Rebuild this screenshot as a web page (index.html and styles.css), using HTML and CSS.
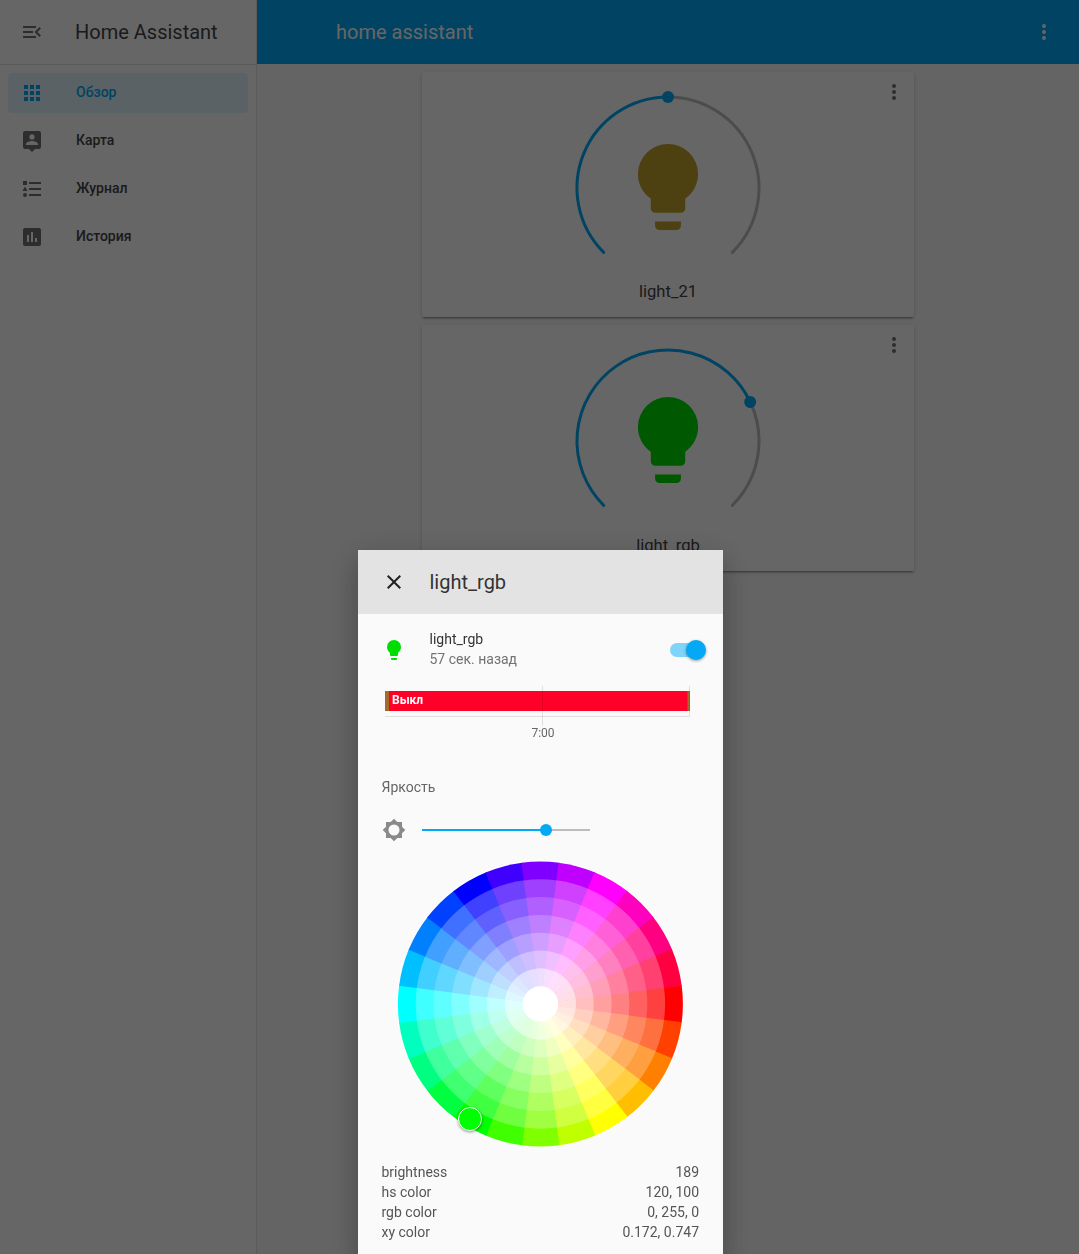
FILE: index.html
```html
<!doctype html>
<html>
<head>
	<title>Home Assistant</title>
	<link rel="stylesheet" href="styles.css">
</head>
<body>
	<div class="app">
		<div class="sidebar">
			<div class="sidebar-head">
				<svg class="icon head-icon" viewBox="0 0 24 24"><path d="M21,15.61L19.59,17L14.58,12L19.59,7L21,8.39L17.44,12L21,15.61M3,6H16V8H3V6M3,13V11H13V13H3M3,18V16H16V18H3Z"/></svg>
				<span class="sidebar-title">Home Assistant</span>
			</div>
			<div class="nav">
				<div class="nav-item active">
					<svg class="icon" viewBox="0 0 24 24"><path d="M16,20H20V16H16M16,14H20V10H16M10,8H14V4H10M16,8H20V4H16M10,14H14V10H10M4,14H8V10H4M4,20H8V16H4M10,20H14V16H10M4,8H8V4H4V8Z"/></svg>
					<span>Обзор</span>
				</div>
				<div class="nav-item">
					<svg class="icon" viewBox="0 0 24 24"><path d="M18,16H6V15.1C6,13.1 10,12 12,12C14,12 18,13.1 18,15.1V16M12,5.3C13.5,5.3 14.7,6.5 14.7,8C14.7,9.5 13.5,10.7 12,10.7C10.5,10.7 9.3,9.5 9.3,8C9.3,6.5 10.5,5.3 12,5.3M19,2H5C3.89,2 3,2.89 3,4V18A2,2 0 0,0 5,20H9L12,23L15,20H19A2,2 0 0,0 21,18V4C21,2.89 20.1,2 19,2Z"/></svg>
					<span>Карта</span>
				</div>
				<div class="nav-item">
					<svg class="icon" viewBox="0 0 24 24"><path d="M5,9.5L7.5,14H2.5L5,9.5M3,4H7V8H3V4M5,20A2,2 0 0,0 7,18A2,2 0 0,0 5,16A2,2 0 0,0 3,18A2,2 0 0,0 5,20M9,5V7H21V5H9M9,19H21V17H9V19M9,13H21V11H9V13Z"/></svg>
					<span>Журнал</span>
				</div>
				<div class="nav-item">
					<svg class="icon" viewBox="0 0 24 24"><path d="M9,17H7V10H9V17M13,17H11V7H13V17M17,17H15V13H17V17M19,3H5C3.89,3 3,3.89 3,5V19A2,2 0 0,0 5,21H19A2,2 0 0,0 21,19V5C21,3.89 20.1,3 19,3Z"/></svg>
					<span>История</span>
				</div>
			</div>
		</div>
		<div class="main">
			<div class="topbar">
				<span class="topbar-title">home assistant</span>
				<svg class="icon" viewBox="0 0 24 24"><path d="M12,16A2,2 0 0,1 14,18A2,2 0 0,1 12,20A2,2 0 0,1 10,18A2,2 0 0,1 12,16M12,10A2,2 0 0,1 14,12A2,2 0 0,1 12,14A2,2 0 0,1 10,12A2,2 0 0,1 12,10M12,4A2,2 0 0,1 14,6A2,2 0 0,1 12,8A2,2 0 0,1 10,6A2,2 0 0,1 12,4Z"/></svg>
			</div>
			<div class="cards">
				<div class="card">
					<svg class="icon card-menu" viewBox="0 0 24 24"><path d="M12,16A2,2 0 0,1 14,18A2,2 0 0,1 12,20A2,2 0 0,1 10,18A2,2 0 0,1 12,16M12,10A2,2 0 0,1 14,12A2,2 0 0,1 12,14A2,2 0 0,1 10,12A2,2 0 0,1 12,10M12,4A2,2 0 0,1 14,6A2,2 0 0,1 12,8A2,2 0 0,1 10,6A2,2 0 0,1 12,4Z"/></svg>
					<svg class="gauge" viewBox="0 0 200 170">
						<path class="arc-rest" d="M100,9A91,91 0 0,1 164.35,164.35"/>
						<path class="arc-on" d="M35.65,164.35A91,91 0 0,1 100,9"/>
						<circle class="arc-thumb" cx="100" cy="9" r="6"/>
						<path class="bulb-yellow" transform="translate(48.4,47.4) scale(4.3)" d="M12,2A7,7 0 0,0 5,9C5,11.38 6.19,13.47 8,14.74V17A1,1 0 0,0 9,18H15A1,1 0 0,0 16,17V14.74C17.81,13.47 19,11.38 19,9A7,7 0 0,0 12,2M9,21A1,1 0 0,0 10,22H14A1,1 0 0,0 15,21V20H9V21Z"/>
					</svg>
					<div class="card-name">light_21</div>
				</div>
				<div class="card">
					<svg class="icon card-menu" viewBox="0 0 24 24"><path d="M12,16A2,2 0 0,1 14,18A2,2 0 0,1 12,20A2,2 0 0,1 10,18A2,2 0 0,1 12,16M12,10A2,2 0 0,1 14,12A2,2 0 0,1 12,14A2,2 0 0,1 10,12A2,2 0 0,1 12,10M12,4A2,2 0 0,1 14,6A2,2 0 0,1 12,8A2,2 0 0,1 10,6A2,2 0 0,1 12,4Z"/></svg>
					<svg class="gauge" viewBox="0 0 200 170">
						<path class="arc-rest" d="M182.2,61A91,91 0 0,1 164.35,164.35"/>
						<path class="arc-on" d="M35.65,164.35A91,91 0 1,1 182.2,61"/>
						<circle class="arc-thumb" cx="182.2" cy="61" r="6"/>
						<path class="bulb-green" transform="translate(48.4,47.4) scale(4.3)" d="M12,2A7,7 0 0,0 5,9C5,11.38 6.19,13.47 8,14.74V17A1,1 0 0,0 9,18H15A1,1 0 0,0 16,17V14.74C17.81,13.47 19,11.38 19,9A7,7 0 0,0 12,2M9,21A1,1 0 0,0 10,22H14A1,1 0 0,0 15,21V20H9V21Z"/>
					</svg>
					<div class="card-name">light_rgb</div>
				</div>
			</div>
		</div>
	</div>

	<div class="backdrop"></div>

	<div class="dialog">
		<div class="dialog-head">
			<svg class="icon" viewBox="0 0 24 24"><path d="M19,6.41L17.59,5L12,10.59L6.41,5L5,6.41L10.59,12L5,17.59L6.41,19L12,13.41L17.59,19L19,17.59L13.41,12L19,6.41Z"/></svg>
			<span class="dialog-title">light_rgb</span>
		</div>
		<div class="state-row">
			<svg class="icon state-icon" viewBox="0 0 24 24"><path d="M12,2A7,7 0 0,0 5,9C5,11.38 6.19,13.47 8,14.74V17A1,1 0 0,0 9,18H15A1,1 0 0,0 16,17V14.74C17.81,13.47 19,11.38 19,9A7,7 0 0,0 12,2M9,21A1,1 0 0,0 10,22H14A1,1 0 0,0 15,21V20H9V21Z"/></svg>
			<div class="state-info">
				<div class="state-name">light_rgb</div>
				<div class="state-time">57 сек. назад</div>
			</div>
			<div class="toggle"><div class="toggle-thumb"></div></div>
		</div>
		<svg class="timeline" viewBox="0 0 365 60">
			<rect class="tl-bar" x="27" y="5" width="305" height="20"/>
			<rect class="tl-end" x="27" y="5" width="4" height="20"/>
			<rect class="tl-end" x="329.5" y="5" width="2.5" height="20"/>
			<path class="tl-grid" d="M27,30.5H332M184.5,0V40M331.5,0V30"/>
			<text class="tl-label" x="34" y="18">Выкл</text>
			<text class="tl-tick" x="185" y="51">7:00</text>
		</svg>
		<div class="control-label">Яркость</div>
		<div class="slider-row">
			<svg class="icon slider-icon" viewBox="0 0 24 24"><path fill-rule="evenodd" d="M12,0.69L15.31,4H20V8.69L23.31,12L20,15.31V20H15.31L12,23.31L8.69,20H4V15.31L0.69,12L4,8.69V4H8.69L12,0.69M12,6.500A5.500,5.500 0 0,0 6.500,12A5.500,5.500 0 0,0 12,17.500A5.500,5.500 0 0,0 17.500,12A5.500,5.500 0 0,0 12,6.500Z"/></svg>
			<div class="slider">
				<div class="slider-fill"></div>
				<div class="slider-thumb"></div>
			</div>
		</div>
		<div class="wheel-wrap">
			<canvas id="wheel" width="288" height="288"></canvas>
			<div class="wheel-thumb"></div>
		</div>
		<div class="attrs">
			<div class="attr"><span>brightness</span><span>189</span></div>
			<div class="attr"><span>hs color</span><span>120, 100</span></div>
			<div class="attr"><span>rgb color</span><span>0, 255, 0</span></div>
			<div class="attr"><span>xy color</span><span>0.172, 0.747</span></div>
		</div>
	</div>

	<script>
		function hsv(h, s) {
			var f = function(n) {
				var k = (n + h / 60) % 6;
				var v = 1 - s * Math.max(0, Math.min(k, 4 - k, 1));
				return Math.round(v * 255);
			};
			return 'rgb(' + f(5) + ',' + f(3) + ',' + f(1) + ')';
		}

		function drawWheel() {
			var ctx = document.getElementById('wheel').getContext('2d');
			var cx = 144.4, cy = 144, rings = 8, outer = 142.5;
			var step = Math.PI / 12;

			ctx.fillStyle = '#fff';
			ctx.beginPath();
			ctx.arc(cx, cy, 143.6, 0, Math.PI * 2);
			ctx.fill();

			for (var r = rings - 1; r >= 1; r--) {
				var radius = outer * (r + 1) / rings;
				for (var i = 0; i < 24; i++) {
					var a = i * step;
					ctx.fillStyle = hsv(i * 15, r == rings - 1 ? 1 : r / rings);
					ctx.beginPath();
					ctx.moveTo(cx, cy);
					ctx.arc(cx, cy, radius, a - step / 2 - 0.003, a + step / 2 + 0.003);
					ctx.closePath();
					ctx.fill();
				}
			}

			// middle is one white disc, sectors leave a seam dot there
			ctx.fillStyle = '#fff';
			ctx.beginPath();
			ctx.arc(cx, cy, outer / rings, 0, Math.PI * 2);
			ctx.fill();
		}

		drawWheel();
	</script>
</body>
</html>
```

FILE: styles.css
```css
html, body {
	margin: 0;
	padding: 0;
	width: 100%;
	height: 100%;
	overflow: hidden;
	font-family: Roboto, "Noto Sans", sans-serif;
	color: #444;
}

.icon {
	display: block;
	width: 24px;
	height: 24px;
	flex: none;
	fill: #727272;
}

.app {
	display: flex;
	height: 100%;
	background-color: #fafafa;
}

/************** Sidebar ******************/
.sidebar {
	width: 256px;
	flex: none;
	background-color: #fff;
	border-right: 1px solid #e0e0e0;
}

.sidebar-head {
	display: flex;
	align-items: center;
	height: 64px;
	box-sizing: content-box;
	padding-left: 20px;
	border-bottom: 1px solid #e0e0e0;
}

.sidebar-title {
	margin-left: 31px;
	font-size: 20px;
}

.nav {
	padding-top: 8px;
}

.nav-item {
	display: flex;
	align-items: center;
	height: 40px;
	margin: 0 8px 8px;
	padding-left: 12px;
	border-radius: 4px;
	font-size: 14px;
	font-weight: 500;
}

.nav-item span {
	margin-left: 32px;
	margin-top: -2px;
}

.nav-item.active {
	background-color: rgba(3, 169, 244, 0.12);
	color: #03a9f4;
}

.nav-item.active .icon {
	fill: #03a9f4;
}

/************** Main ******************/
.main {
	flex: 1;
	min-width: 0;
}

.topbar {
	display: flex;
	align-items: center;
	justify-content: space-between;
	height: 64px;
	padding: 0 23px 0 79px;
	background-color: #03a9f4;
	color: #fff;
}

.topbar .icon {
	fill: #fff;
}

.topbar-title {
	font-size: 20px;
}

.cards {
	display: flex;
	flex-direction: column;
	align-items: center;
	gap: 8px;
	padding-top: 8px;
}

.card {
	position: relative;
	width: 492px;
	height: 245px;
	box-sizing: border-box;
	padding-top: 16px;
	background-color: #fff;
	border-radius: 2px;
	box-shadow: 0 2px 2px 0 rgba(0, 0, 0, 0.14), 0 1px 5px 0 rgba(0, 0, 0, 0.12), 0 3px 1px -2px rgba(0, 0, 0, 0.2);
	text-align: center;
}

.card + .card {
	height: 246px;
}

.card-menu {
	position: absolute;
	top: 8px;
	right: 8px;
}

.gauge {
	display: block;
	width: 200px;
	height: 170px;
	margin: 0 auto 22px;
}

.card + .card .gauge {
	margin-bottom: 23px;
}

.arc-rest, .arc-on {
	fill: none;
	stroke-width: 3;
	stroke-linecap: round;
}

.arc-rest {
	stroke: #bdbdbd;
}

.arc-on {
	stroke: #03a9f4;
}

.arc-thumb {
	fill: #03a9f4;
}

.bulb-yellow {
	fill: #c0a22d;
}

.bulb-green {
	fill: #00dc00;
}

.card-name {
	font-size: 16.6px;
	line-height: 24px;
}

/************** Dialog ******************/
.backdrop {
	position: fixed;
	top: 0;
	right: 0;
	bottom: 0;
	left: 0;
	background-color: rgba(0, 0, 0, 0.6);
}

.dialog {
	position: fixed;
	top: 550px;
	left: 358px;
	bottom: 0;
	width: 365px;
	overflow: hidden;
	background-color: #fafafa;
	color: #333;
	box-shadow: 0 16px 24px 2px rgba(0, 0, 0, 0.14), 0 6px 30px 5px rgba(0, 0, 0, 0.12);
}

.dialog-head {
	display: flex;
	align-items: center;
	height: 64px;
	padding-left: 24px;
	background-color: #e3e3e3;
}

.dialog-head .icon {
	fill: #212121;
}

.dialog-title {
	margin-left: 23.5px;
	font-size: 20px;
}

.state-row {
	display: flex;
	align-items: center;
	padding: 15px 16px 0 24px;
}

.state-icon {
	margin-top: 2px;
	fill: #00dd00;
}

.state-info {
	flex: 1;
	margin-left: 23.5px;
	font-size: 14px;
	line-height: 20px;
}

.state-time {
	color: #727272;
}

.toggle {
	position: relative;
	width: 35px;
	height: 14px;
	margin: 2px 2px 0 0;
	border-radius: 7px;
	background-color: #7fd4fa;
}

.toggle-thumb {
	position: absolute;
	top: -3px;
	right: -1px;
	width: 20px;
	height: 20px;
	border-radius: 50%;
	background-color: #03a9f4;
	box-shadow: 0 1px 3px rgba(0, 0, 0, 0.4);
}

.timeline {
	display: block;
	width: 365px;
	height: 60px;
	margin-top: 17px;
}

.tl-bar {
	fill: #ff0029;
}

.tl-end {
	fill: #a66a2a;
}

.tl-grid {
	fill: none;
	stroke: #000;
	stroke-opacity: 0.1;
	stroke-width: 1;
}

.tl-label {
	fill: #fff;
	font-size: 12px;
	font-weight: 700;
}

.tl-tick {
	fill: #666;
	font-size: 12px;
	text-anchor: middle;
}

.control-label {
	margin-top: 31px;
	padding-left: 23.5px;
	font-size: 14px;
	line-height: 20px;
	color: #666;
}

.slider-row {
	display: flex;
	align-items: center;
	height: 48px;
	margin-top: 9px;
	padding-left: 24px;
}

.slider-icon {
	fill: #8a8a8a;
}

.slider {
	position: relative;
	width: 168px;
	height: 2px;
	margin-left: 16px;
	background-color: #bdbdbd;
}

.slider-fill {
	width: 124px;
	height: 100%;
	background-color: #03a9f4;
}

.slider-thumb {
	position: absolute;
	top: -5px;
	left: 118px;
	width: 12px;
	height: 12px;
	border-radius: 50%;
	background-color: #03a9f4;
}

.wheel-wrap {
	position: relative;
	width: 288px;
	height: 288px;
	margin: 6px 0 0 38px;
}

#wheel {
	display: block;
}

.wheel-thumb {
	position: absolute;
	left: 62px;
	top: 247px;
	width: 22px;
	height: 22px;
	border: 1px solid #fff;
	border-radius: 50%;
	background-color: #00ff00;
	box-shadow: 0 1px 3px rgba(0, 0, 0, 0.4);
}

.attrs {
	margin-top: 14px;
	padding: 0 24px 0 23.5px;
	font-size: 14px;
	line-height: 20px;
	color: #555;
}

.attr {
	display: flex;
	justify-content: space-between;
}
```
